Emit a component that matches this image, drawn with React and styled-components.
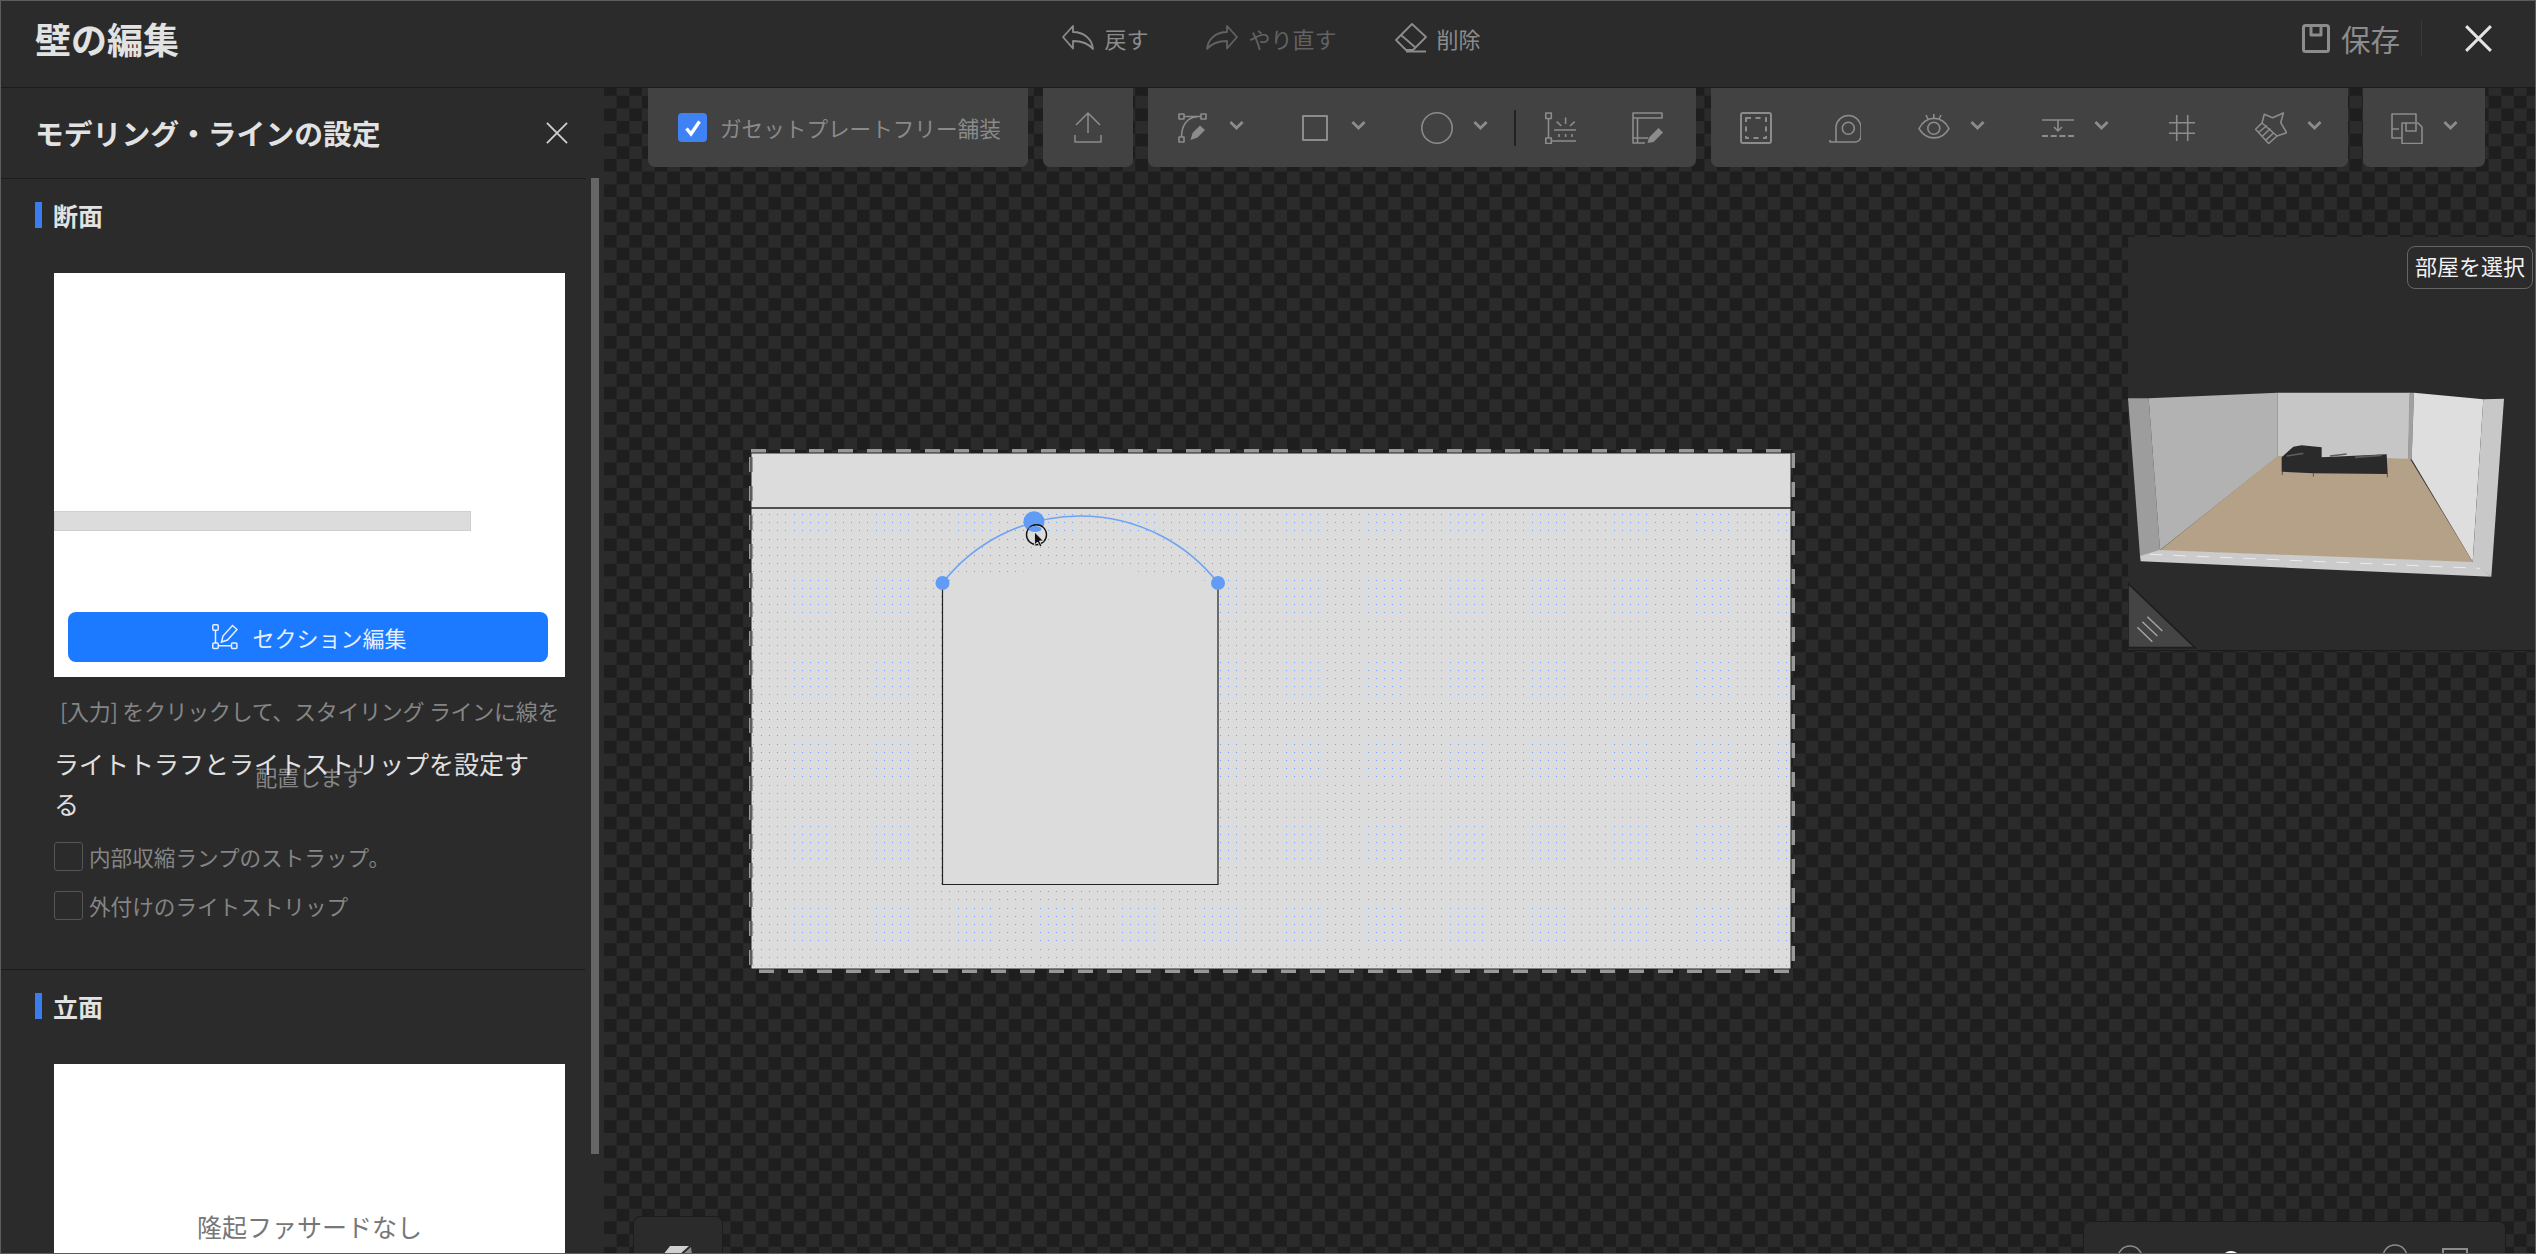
import styled, { createGlobalStyle } from "styled-components";

const GlobalStyle = createGlobalStyle`
  html, body {
    margin: 0;
    padding: 0;
    background: #2b2b2b;
  }
  * {
    box-sizing: border-box;
  }
`;

const Page = styled.div`
  display: flex;
  flex-direction: column;
  width: 2536px;
  height: 1254px;
  overflow: hidden;
  border: 1px solid #5c5c5c;
  background: #2b2b2b;
  font-family: "Noto Sans CJK JP", "Noto Sans", sans-serif;
`;

const Header = styled.header`
  display: grid;
  grid-template-columns: 1fr auto 1fr;
  align-items: center;
  flex: none;
  height: 87px;
  padding: 0 43px 12px 34px;
  border-bottom: 1px solid #1c1c1c;
`;

const Title = styled.h1`
  margin: 0;
  color: #e2e2e2;
  font-size: 36px;
  font-weight: 700;
  line-height: 44px;
`;

const HeaderActions = styled.div`
  display: flex;
  align-items: center;
  gap: 58px;
  margin-left: 16px;
`;

const Action = styled.div`
  display: flex;
  align-items: center;
  gap: 10px;
  color: ${({ $dim }) => ($dim ? "#626262" : "#8c8c8c")};
  font-size: 22px;
  line-height: 32px;
`;

const HeaderRight = styled.div`
  display: flex;
  align-items: center;
  justify-content: flex-end;
  color: #8c8c8c;
`;

const SaveLabel = styled.span`
  margin-left: 11px;
  font-size: 29.5px;
  line-height: 40px;
`;

const HeaderDivider = styled.span`
  width: 1px;
  height: 36px;
  margin: 0 43px 0 21px;
  background: #3a3a3a;
`;

const Body = styled.div`
  display: flex;
  flex: 1;
  min-height: 0;
`;

const Sidebar = styled.aside`
  position: relative;
  flex: none;
  width: 603px;
  overflow: hidden;
  background: #2b2b2b;
`;

const Scrollbar = styled.span`
  position: absolute;
  top: 90px;
  left: 590px;
  width: 8px;
  height: 976px;
  background: #666;
`;

const PanelHead = styled.div`
  display: flex;
  align-items: center;
  justify-content: space-between;
  width: 585px;
  height: 91px;
  padding: 0 18px 0 34px;
  border-bottom: 1px solid #1c1c1c;
`;

const PanelTitle = styled.h2`
  margin: 0;
  color: #e2e2e2;
  font-size: 28.8px;
  font-weight: 700;
  line-height: 40px;
`;

const Section = styled.section`
  width: 585px;
  padding: 23px 0 0 34px;
  border-bottom: ${({ $divided }) => ($divided ? "1px solid #1c1c1c" : "none")};
  padding-bottom: ${({ $divided }) => ($divided ? "49px" : "0")};
`;

const SectionHead = styled.div`
  display: flex;
  align-items: center;
  gap: 11px;
  height: 26px;
  color: #e2e2e2;
  font-size: 25px;
  font-weight: 700;
  line-height: 26px;

  &::before {
    content: "";
    width: 7px;
    height: 26px;
    background: #3b7cf0;
  }
`;

const SectionBody = styled.div`
  width: 511px;
  margin: 45px 0 0 19px;
`;

const Preview = styled.div`
  display: flex;
  flex-direction: column;
  height: ${({ $height }) => $height}px;
  padding-top: ${({ $top }) => $top}px;
  background: #fff;
`;

const ProfileBar = styled.div`
  width: 417px;
  height: 20px;
  border: 1px solid #cfcfcf;
  background: #dcdcdc;
`;

const EditButton = styled.button`
  display: flex;
  align-items: center;
  justify-content: center;
  gap: 14px;
  height: 50px;
  margin: auto 17px 15px 14px;
  padding: 0 0 0 3px;
  border: none;
  border-radius: 8px;
  background: #1b7aff;
  color: #e6efff;
  font-family: inherit;
  font-size: 22px;
`;

const Hint = styled.p`
  height: 66px;
  margin: 0;
  color: #858585;
  font-size: 22px;
  line-height: 66px;
  letter-spacing: -0.3px;
  text-align: center;
`;

const StripHeading = styled.h3`
  margin: 0 20px 19px 0;
  color: #e0e0e0;
  font-size: 25px;
  font-weight: 400;
  line-height: 40px;
`;

const CheckRow = styled.label`
  display: flex;
  align-items: center;
  gap: 6px;
  height: 29px;
  color: #858585;
  font-size: 21.6px;
  line-height: 29px;

  & + & {
    margin-top: 20px;
  }
`;

const EmptyBox = styled.span`
  flex: none;
  width: 29px;
  height: 29px;
  border: 1px solid #555;
  border-radius: 3px;
`;

const NoFacade = styled.div`
  color: #777;
  font-size: 25px;
  line-height: 36px;
  text-align: center;
`;

const Canvas = styled.main`
  position: relative;
  flex: 1;
  overflow: hidden;
  background-color: #2b2b2b;
  background-image: conic-gradient(#1e1e1e 25%, #2b2b2b 0 50%, #1e1e1e 0 75%, #2b2b2b 0);
  background-size: 25.3px 25.3px;
  background-position: 0 7.75px;
`;

const Toolbar = styled.div`
  display: flex;
  gap: 15px;
  padding-left: 44px;
`;

const ToolGroup = styled.div`
  display: flex;
  align-items: center;
  gap: ${({ $gap }) => $gap ?? 55}px;
  flex: none;
  width: ${({ $width }) => $width}px;
  height: 79px;
  padding: 0 0 0 ${({ $left }) => $left ?? 29}px;
  border-radius: 0 0 7px 7px;
  background: #424242;
  color: #8c8c8c;
  justify-content: ${({ $center }) => ($center ? "center" : "flex-start")};
`;

const Tool = styled.div`
  display: flex;
  align-items: center;
  gap: 20px;
`;

const ToolDivider = styled.span`
  width: 2px;
  height: 36px;
  margin: 0 -26px 0 -29px;
  background: #222;
`;

const BlueCheck = styled.span`
  display: flex;
  align-items: center;
  justify-content: center;
  flex: none;
  width: 29px;
  height: 29px;
  border-radius: 4px;
  background: #3f82f5;
`;

const ToolLabel = styled.span`
  margin-left: 13px;
  color: #8a8a8a;
  font-size: 21.6px;
  line-height: 30px;
  white-space: nowrap;
`;

const WallDrawing = styled.svg`
  position: absolute;
  top: 361px;
  left: 145px;
`;

const MiniMap = styled.div`
  position: absolute;
  top: 149px;
  left: 1524px;
  width: 408px;
  height: 414px;
  border-bottom: 1px solid #1c1c1c;
  background: #2b2b2b;
`;

const RoomPicture = styled.svg`
  display: block;
`;

const RoomButton = styled.button`
  position: absolute;
  top: 9px;
  right: 3px;
  width: 126px;
  height: 43px;
  padding: 0 0 6px;
  border: 1px solid #666;
  border-radius: 8px;
  background: #2b2b2b;
  color: #f2f2f2;
  font-family: inherit;
  font-size: 22px;
  line-height: 36px;
`;

const ViewTab = styled.div`
  position: absolute;
  bottom: 0;
  left: 29px;
  display: flex;
  justify-content: center;
  width: 90px;
  height: 37px;
  padding-top: 29px;
  border: 1px solid #1c1c1c;
  border-bottom: none;
  border-radius: 7px 7px 0 0;
  background: #2b2b2b;
`;

const ZoomBar = styled.div`
  position: absolute;
  bottom: 0;
  left: 1479px;
  width: 423px;
  height: 32px;
  border: 1px solid #1c1c1c;
  border-bottom: none;
  border-radius: 7px 7px 0 0;
  background: #2b2b2b;
`;

const Glyph = styled.svg`
  display: block;
  flex: none;
  fill: none;
  stroke: currentColor;
  stroke-width: ${({ $stroke }) => $stroke || 1.6};
  stroke-linejoin: round;
`;

const Icon = ({ children, size = 32, height, stroke }) => (
  <Glyph width={size} height={height || size} viewBox={`0 0 ${size} ${height || size}`} $stroke={stroke}>
    {children}
  </Glyph>
);

const Chevron = () => (
  <svg width="15" height="11" viewBox="0 0 16 11" fill="none" style={{ marginTop: -5, flex: "none" }}>
    <path d="M1.5 1.8 8 8.2 14.5 1.8" stroke="#8c8c8c" strokeWidth="3" />
  </svg>
);

const CloseMark = ({ size, width, color }) => (
  <svg width={size} height={size} viewBox="0 0 24 24" fill="none" style={{ display: "block" }}>
    <path d="M1 1 23 23M23 1 1 23" stroke={color} strokeWidth={width} />
  </svg>
);

const undoPath = "M1 12 11 1V7C22 7 30 14 31 24 26 18 20 16 11 16V23.5Z";

const UndoIcon = () => (
  <Icon height={26} stroke={1.8}>
    <path d={undoPath} />
  </Icon>
);

const RedoIcon = () => (
  <Icon height={26} stroke={1.8}>
    <path d={undoPath} transform="translate(32 0) scale(-1 1)" />
  </Icon>
);

const EraserIcon = () => (
  <Icon height={30} stroke={1.8}>
    <path d="M17 1 31 14 18 27H11L1 17Z" />
    <path d="M6 12 21 25M11 28.5H31" />
  </Icon>
);

const SaveIcon = () => (
  <Icon size={28} height={29} stroke={3}>
    <rect x="1.5" y="1.5" width="25" height="26" rx="2" />
    <path d="M9 2V11H19V2" />
  </Icon>
);

const UploadIcon = () => (
  <Icon stroke={1.5}>
    <path d="M16 21V2M4 13 16 1 28 13M3 23V30H29V23" />
  </Icon>
);

const PathPenIcon = () => (
  <Icon>
    <rect x="2" y="2" width="5" height="5" />
    <rect x="24" y="2" width="5" height="5" />
    <rect x="2" y="25" width="5" height="5" />
    <path d="M7 4.5H24M4.5 25C4.5 14 10 5 20 5" />
    <path d="M13.5 28 15.5 21 23 13.5 28 18 20.5 25.5Z" fill="currentColor" stroke="none" />
  </Icon>
);

const SquareIcon = () => (
  <Icon stroke={2}>
    <rect x="4" y="4" width="24" height="24" />
  </Icon>
);

const CircleIcon = () => (
  <Icon>
    <circle cx="16" cy="16" r="15.2" />
  </Icon>
);

const LightLineIcon = () => (
  <Icon>
    <rect x="0.8" y="1" width="5.5" height="5.5" />
    <rect x="0.8" y="26" width="5.5" height="5.5" />
    <path d="M3.5 6.5V26M6.5 29H31M9 18H31M14 22V25M20.6 22V25M27 22V25M20.6 5.6V12M11.7 9.7 16.3 14M29.7 9.7 25 14" />
  </Icon>
);

const FramePenIcon = () => (
  <Icon>
    <path d="M13 31H1V1H30V6H1M5.5 6V31M1 26H16" />
    <path d="M15.5 31 17 25.5 26.5 16 31 20.5 21.5 30Z" fill="currentColor" stroke="none" />
  </Icon>
);

const RoomFrameIcon = () => (
  <Icon stroke={2}>
    <rect x="1" y="1" width="30" height="30" rx="2" />
    <rect x="6" y="6" width="20" height="20" strokeDasharray="5 4.5" />
  </Icon>
);

const TapeIcon = () => (
  <Icon>
    <path d="M7 30V14.5A12.6 12.6 0 0 1 32 14.5V24A6 6 0 0 1 26 30H1V28" />
    <circle cx="19.3" cy="16.3" r="6" />
  </Icon>
);

const EyeIcon = () => (
  <Icon>
    <path d="M1 16.5C8 3 24 3 31 16.5 24 29 8 29 1 16.5Z" />
    <circle cx="15.8" cy="16.3" r="6" />
    <path d="M8 3 10 7M15.8 2V6M23 3 21 7" />
  </Icon>
);

const OffsetIcon = () => (
  <Icon>
    <path d="M0 8H32M16 8V19M12 15 16 19 20 15" />
    <path d="M0 24H32" strokeDasharray="6 2.7" strokeWidth="2" />
  </Icon>
);

const HashIcon = () => (
  <Icon>
    <path d="M10.7 3V29M21.7 3V29M3 10.7H29M3 21.3H29" />
  </Icon>
);

const BrushIcon = () => (
  <Icon>
    <path d="M9.3 2.3 17.5 5.7 28.4 0.9 25.7 10.7 31.6 20.7 22 24 13.6 31.5 0.6 17.3 7 11Z" />
    <path d="M7 11 22 24M3.5 20.5 12 13.5M7 24.5 15.5 16.5M10.5 28.3 19 20.5" />
  </Icon>
);

const LayoutIcon = () => (
  <Icon>
    <path d="M10 26H1V2H25V10M1 17H8" />
    <path d="M11 11H27L31 15V31.5H11Z" />
    <path d="M15 11V19H25V11" />
  </Icon>
);

const SectionEditIcon = () => (
  <svg width="26" height="26" viewBox="0 0 26 26" fill="none" stroke="#e6efff" strokeWidth="1.5">
    <rect x="0.8" y="0.8" width="5.4" height="5.4" rx="1" />
    <rect x="0.8" y="19" width="5.4" height="5.4" rx="1" />
    <rect x="19.5" y="19" width="5.4" height="5.4" rx="1" />
    <path d="M3.5 6.2V19M6.2 21.7H19.5M9.5 18 11 12 20.5 1.5 25 5.5 15.5 16Z" />
  </svg>
);

const WhiteTick = () => (
  <svg width="20" height="20" viewBox="0 0 20 20" fill="none">
    <path d="M3.5 10.5 8 16 16.5 3.5" stroke="#fff" strokeWidth="3.4" />
  </svg>
);

// one pixel dots on the wall, snapped to whole pixels like the editor's grid
const buildDots = () => {
  let d = "";
  for (let row = 0; row < 56; row++) {
    const y = Math.round(514 + row * 8.2);
    for (let col = 0; col < 127; col++) {
      const x = Math.round(752.5 + col * 8.2);
      d += `M${x} ${y}h1v1h-1z`;
    }
  }
  return d;
};

const wallDots = buildDots();

const WallSketch = () => (
  <WallDrawing width="1048" height="526" viewBox="749 449 1048 526">
    <rect x="751" y="453" width="1040" height="516" fill="#dcdcdc" />
    <path d={wallDots} fill="#6ea3f5" shapeRendering="crispEdges" />
    <path d="M943 884V583Q1080 555 1218 583V884Z" fill="#dcdcdc" />
    <rect x="751" y="451" width="1042" height="520" fill="none" stroke="#999" strokeWidth="4" strokeDasharray="15 14" />
    <rect x="751" y="453" width="1040" height="516" fill="none" stroke="#222" strokeWidth="1" />
    <path d="M751 508H1791" stroke="#222" strokeWidth="1.5" />
    <path d="M942.5 583V884.5H1218V583" fill="none" stroke="#222" strokeWidth="1.2" />
    <path d="M942.5 583A175 175 0 0 1 1218 583" fill="none" stroke="#6ea3f5" strokeWidth="1.6" />
    <circle cx="942.5" cy="583" r="7" fill="#609bf6" />
    <circle cx="1218" cy="583" r="7" fill="#609bf6" />
    <circle cx="1034" cy="521.7" r="10.5" fill="#609bf6" />
    <circle cx="1036.5" cy="534.7" r="10" fill="#dcdcdc" stroke="#111" strokeWidth="1.4" />
    <ellipse cx="1035" cy="529" rx="6.5" ry="3" fill="#609bf6" />
    <path d="M1034.5 532 1034.5 545 1037.5 542 1040 547 1042 546 1039.5 541 1043.5 541Z" fill="#111" stroke="#fff" strokeWidth="0.7" />
  </WallDrawing>
);

const RoomView = () => (
  <RoomPicture width="408" height="413" viewBox="84 51 1224 1239">
    <polygon points="84,535 146,535 180,990 165,1005 120,1008" fill="#9d9d9d" />
    <polygon points="146,535 533,518 533,710 180,990" fill="#b2b2b2" />
    <polygon points="533,518 930,518 925,718 533,710" fill="#c6c6c6" />
    <polygon points="928,518 942,518 935,718 924,718" fill="#a0a0a0" />
    <polygon points="942,518 1150,538 1118,1025 935,718" fill="#dedede" />
    <polygon points="1150,538 1212,536 1174,1070 1118,1030" fill="#c8c8c8" />
    <polygon points="533,708 930,716 1120,1028 178,992" fill="#b4a188" />
    <polygon points="120,1008 178,990 1118,1026 1174,1070 122,1024" fill="#cbcbcb" />
    <path d="M150 1003 1140 1045" stroke="#ececec" strokeWidth="3" strokeDasharray="38 32" fill="none" />
    <polygon points="545,712 580,680 605,676 665,682 665,712 860,703 863,762 640,760 545,755" fill="#2a2a2a" />
    <path d="M560 708 610 700M690 708 740 702M765 712 845 706" stroke="#5c5c5c" strokeWidth="5" fill="none" />
    <path d="M547 755V765M640 760V770M862 762V772" stroke="#555" strokeWidth="3" fill="none" />
    <polygon points="84,1090 84,1283 285,1283" fill="#444" stroke="#1e1e1e" strokeWidth="5" />
    <path d="M142 1190 187 1233M127 1205 172 1248M112 1222 157 1265" stroke="#a8a8a8" strokeWidth="4" fill="none" />
  </RoomPicture>
);

export default function App() {
  return (
    <>
      <GlobalStyle />
      <Page>
        <Header>
          <Title>壁の編集</Title>
          <HeaderActions>
            <Action>
              <UndoIcon />
              戻す
            </Action>
            <Action $dim>
              <RedoIcon />
              やり直す
            </Action>
            <Action>
              <EraserIcon />
              削除
            </Action>
          </HeaderActions>
          <HeaderRight>
            <SaveIcon />
            <SaveLabel>保存</SaveLabel>
            <HeaderDivider />
            <CloseMark size={27} width={2.6} color="#e4e4e4" />
          </HeaderRight>
        </Header>
        <Body>
          <Sidebar>
            <PanelHead>
              <PanelTitle>モデリング・ラインの設定</PanelTitle>
              <CloseMark size={22} width={2} color="#cfcfcf" />
            </PanelHead>
            <Scrollbar />
            <Section $divided>
              <SectionHead>断面</SectionHead>
              <SectionBody>
                <Preview $height={404} $top={238}>
                  <ProfileBar />
                  <EditButton>
                    <SectionEditIcon />
                    セクション編集
                  </EditButton>
                </Preview>
                <Hint>[入力] をクリックして、スタイリング ラインに線を配置します</Hint>
                <StripHeading>ライトトラフとライトストリップを設定する</StripHeading>
                <CheckRow>
                  <EmptyBox />
                  内部収縮ランプのストラップ。
                </CheckRow>
                <CheckRow>
                  <EmptyBox />
                  外付けのライトストリップ
                </CheckRow>
              </SectionBody>
            </Section>
            <Section>
              <SectionHead>立面</SectionHead>
              <SectionBody>
                <Preview $height={300} $top={144}>
                  <NoFacade>隆起ファサードなし</NoFacade>
                </Preview>
              </SectionBody>
            </Section>
          </Sidebar>
          <Canvas>
            <Toolbar>
              <ToolGroup $width={380} $left={30} $gap={0}>
                <BlueCheck>
                  <WhiteTick />
                </BlueCheck>
                <ToolLabel>ガセットプレートフリー舗装</ToolLabel>
              </ToolGroup>
              <ToolGroup $width={90} $left={0} $center>
                <UploadIcon />
              </ToolGroup>
              <ToolGroup $width={548}>
                <Tool>
                  <PathPenIcon />
                  <Chevron />
                </Tool>
                <Tool>
                  <SquareIcon />
                  <Chevron />
                </Tool>
                <Tool>
                  <CircleIcon />
                  <Chevron />
                </Tool>
                <ToolDivider />
                <LightLineIcon />
                <FramePenIcon />
              </ToolGroup>
              <ToolGroup $width={637} $gap={57}>
                <RoomFrameIcon />
                <TapeIcon />
                <Tool>
                  <EyeIcon />
                  <Chevron />
                </Tool>
                <Tool>
                  <OffsetIcon />
                  <Chevron />
                </Tool>
                <HashIcon />
                <Tool>
                  <BrushIcon />
                  <Chevron />
                </Tool>
              </ToolGroup>
              <ToolGroup $width={122} $left={28}>
                <Tool>
                  <LayoutIcon />
                  <Chevron />
                </Tool>
              </ToolGroup>
            </Toolbar>
            <WallSketch />
            <MiniMap>
              <RoomView />
              <RoomButton>部屋を選択</RoomButton>
            </MiniMap>
            <ViewTab>
              <svg width="30" height="10" viewBox="0 0 30 10">
                <polygon points="7,0 26,0 16,9 0,9" fill="#cfcfcf" />
                <polygon points="28,1 29,9 19,9" fill="#8a8a8a" />
              </svg>
            </ViewTab>
            <ZoomBar>
              <svg width="421" height="31" viewBox="2084 1222 421 31">
                <circle cx="2130" cy="1258" r="12" fill="none" stroke="#8c8c8c" strokeWidth="1.6" />
                <circle cx="2231" cy="1261" r="10" fill="#fff" />
                <circle cx="2395" cy="1257" r="12" fill="none" stroke="#8c8c8c" strokeWidth="1.6" />
                <rect x="2443" y="1249" width="24" height="20" fill="none" stroke="#8c8c8c" strokeWidth="2" />
              </svg>
            </ZoomBar>
          </Canvas>
        </Body>
      </Page>
    </>
  );
}
